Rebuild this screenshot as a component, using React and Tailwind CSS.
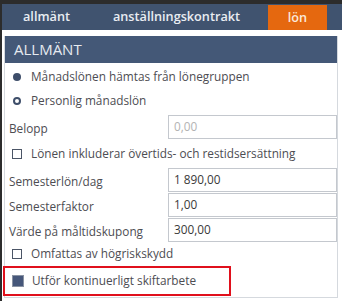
export default function App() {
  const font = { fontFamily: '"Open Sans", "Noto Sans", sans-serif' };
  const Label = ({ children }) => (
    <span className="text-[11.8px] text-[#4d4d52] leading-none">{children}</span>
  );
  const InputRow = ({ label, value, muted, h }) => (
    <div className={`flex items-center ${h}`}>
      <div className="w-[159px]">
        <Label>{label}</Label>
      </div>
      <div className="flex-1 h-[24px] border border-[#c4c8ce] bg-white flex items-center pl-[5px]">
        <span className={`text-[11.8px] leading-none ${muted ? "text-[#b3b3b3]" : "text-[#3a3a3a]"}`}>{value}</span>
      </div>
    </div>
  );
  return (
    <div className="w-[342px] h-[301px] bg-[#2c2c2c] pt-[4px] pl-[2px] overflow-hidden" style={font}>
      <div className="h-[26px] bg-[#40536f] flex items-stretch">
        <div className="w-[89px] flex items-center justify-center text-[12.7px] font-semibold text-[#e9edf2]">allmänt</div>
        <div className="w-[171px] flex items-center justify-center text-[12.7px] font-semibold text-[#e9edf2]">anställningskontrakt</div>
        <div className="w-[59px] ml-[6px] flex items-center justify-center text-[12.7px] font-semibold text-[#fbe9dc] bg-[#e5680f] mt-[1px]">lön</div>
      </div>
      <div className="h-[271px] bg-white pt-[3px] pl-[2px] pr-[4px] pb-[6px]">
        <div className="h-full border border-[#d5d9de] border-t-0 relative">
          <div className="h-[27px] bg-[#445877] flex items-center pl-[9px] text-[15px] text-[#e6eaf0] mt-[3px]">ALLMÄNT</div>
          <div className="pl-[4px] pt-[2px]">
            <div className="flex items-center h-[24px]">
              <div className="w-[22px] pl-[4px] flex">
                <div className="w-[8px] h-[8px] rounded-full bg-[#3e4e6a]" />
              </div>
              <Label>Månadslönen hämtas från lönegruppen</Label>
            </div>
            <div className="flex items-center h-[24px]">
              <div className="w-[22px] pl-[4px] flex">
                <div className="w-[8px] h-[8px] rounded-full border-[2px] border-[#3e4e6a]" />
              </div>
              <Label>Personlig månadslön</Label>
            </div>
            <InputRow label="Belopp" value="0,00" muted h="h-[27px]" />
            <div className="flex items-center h-[27px]">
              <div className="w-[22px] pl-[3px] flex">
                <div className="w-[10px] h-[10px] border border-[#4b5566] bg-white" />
              </div>
              <Label>Lönen inkluderar övertids- och restidsersättning</Label>
            </div>
            <InputRow label="Semesterlön/dag" value="1 890,00" h="h-[25px]" />
            <InputRow label="Semesterfaktor" value="1,00" h="h-[25px]" />
            <InputRow label="Värde på måltidskupong" value="300,00" h="h-[25px]" />
            <div className="flex items-center h-[24px]">
              <div className="w-[22px] pl-[3px] flex">
                <div className="w-[10px] h-[10px] border border-[#4b5566] bg-white" />
              </div>
              <Label>Omfattas av högriskskydd</Label>
            </div>
          </div>
          <div className="absolute left-[-2px] top-[230px] w-[228px] h-[30px] border-[2px] border-[#e0101c] flex items-center">
            <div className="w-[27px] pl-[7px] flex">
              <div className="w-[12px] h-[12px] border border-[#8a93a3] bg-[#46577a]" />
            </div>
            <Label>Utför kontinuerligt skiftarbete</Label>
          </div>
        </div>
      </div>
    </div>
  );
}
